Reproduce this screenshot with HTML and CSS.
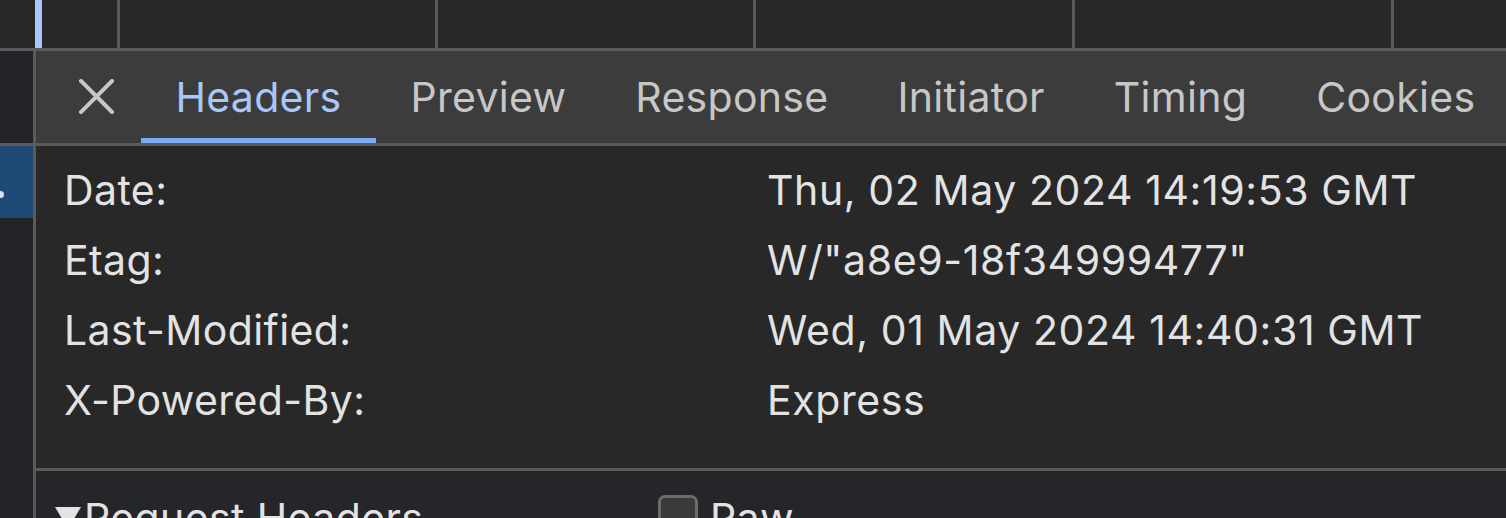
FILE: index.html
```html
<!DOCTYPE html>
<html>
<head>
<meta charset="utf-8">
<link rel="stylesheet" href="styles.css">
</head>
<body>
<div class="app">
  <div class="topstrip">
    <div class="cell c1"></div>
    <div class="cell c2"></div>
    <div class="cell c3"></div>
    <div class="cell c3"></div>
    <div class="cell c4"></div>
    <div class="cell c4"></div>
    <div class="cell c5"></div>
  </div>
  <div class="main">
    <div class="sidebar">
      <div class="side-top"></div>
      <div class="side-line"></div>
      <div class="side-sel"><span class="dot"></span></div>
      <div class="side-rest"></div>
    </div>
    <div class="panel">
      <div class="tabbar">
        <div class="close">
          <svg width="35" height="35" viewBox="0 0 35 35"><path d="M2 2 L33 33 M33 2 L2 33" stroke="#c7c7c7" stroke-width="4" stroke-linecap="square" fill="none"/></svg>
        </div>
        <div class="tab active">Headers</div>
        <div class="tab">Preview</div>
        <div class="tab">Response</div>
        <div class="tab">Initiator</div>
        <div class="tab">Timing</div>
        <div class="tab">Cookies</div>
      </div>
      <div class="headers">
        <div class="row"><span class="name">Date:</span><span class="value">Thu, 02 May 2024 14:19:53 GMT</span></div>
        <div class="row"><span class="name">Etag:</span><span class="value">W/"a8e9-18f34999477"</span></div>
        <div class="row"><span class="name">Last-Modified:</span><span class="value">Wed, 01 May 2024 14:40:31 GMT</span></div>
        <div class="row"><span class="name">X-Powered-By:</span><span class="value">Express</span></div>
      </div>
      <div class="section">
        <span class="tri"></span><span class="sec-title">Request Headers</span>
        <span class="raw"><span class="box"></span>Raw</span>
      </div>
    </div>
  </div>
</div>
</body>
</html>
```
FILE: styles.css
```css
html, body {
  margin: 0;
  padding: 0;
  background: #282828;
  overflow: hidden;
}
.app {
  width: 1506px;
  height: 518px;
  display: flex;
  flex-direction: column;
  font-family: Inter, "Noto Sans", sans-serif;
  overflow: hidden;
}
.topstrip {
  height: 48px;
  display: flex;
  background: #282828;
  border-bottom: 3px solid #5a5a5a;
  flex: none;
}
.cell { height: 48px; box-sizing: border-box; flex: none; }
.c1 { width: 42px; border-right: 7px solid #a8c7fa; }
.c2 { width: 78px; border-right: 3px solid #5a5a5a; }
.c3 { width: 318px; border-right: 3px solid #5a5a5a; }
.c4 { width: 319px; border-right: 3px solid #5a5a5a; }
.c5 { flex: 1; }

.main {
  flex: 1;
  display: flex;
}
.sidebar {
  width: 33px;
  border-right: 3px solid #5a5a5a;
  display: flex;
  flex-direction: column;
  background: #232427;
  flex: none;
}
.side-top { height: 92px; }
.side-line { height: 3px; background: #5a5a5a; }
.side-sel {
  height: 72px;
  background: #1f4a75;
  position: relative;
}
.dot {
  position: absolute;
  left: -3px;
  top: 45px;
  width: 7px;
  height: 7px;
  border-radius: 50%;
  background: #cfe2ff;
}
.side-rest { flex: 1; }

.panel {
  flex: 1;
  display: flex;
  flex-direction: column;
  min-width: 0;
  overflow: hidden;
}
.tabbar {
  height: 92px;
  background: #3c3c3c;
  border-bottom: 3px solid #5a5a5a;
  display: flex;
  align-items: stretch;
  flex: none;
  overflow: hidden;
}
.close {
  width: 105px;
  flex: none;
  display: flex;
  align-items: center;
  padding-left: 43px;
  box-sizing: border-box;
}
.close svg { display: block; margin-top: -1px; }
.tab {
  flex: none;
  padding: 0 34.5px;
  display: flex;
  align-items: center;
  font-size: 41px;
  letter-spacing: 0.3px;
  color: #c7c7c7;
  position: relative;
  white-space: nowrap;
}
.tab.active { color: #a8c7fa; }
.tab.active::after {
  content: "";
  position: absolute;
  left: 0;
  right: 0;
  bottom: 0;
  height: 5px;
  background: #7cacf8;
}
.headers {
  height: 325px;
  box-sizing: border-box;
  padding: 9px 0 0 28px;
  border-bottom: 3px solid #5a5a5a;
  background: #282828;
  flex: none;
}
.row {
  height: 70px;
  display: flex;
  align-items: center;
  color: #e3e3e3;
  font-size: 41px;
  letter-spacing: 0.4px;
  white-space: nowrap;
}
.name { width: 702px; flex: none; }
.value {
  font-size: 41px;
  letter-spacing: 0.6px;
  margin-left: 1px;
}
.section {
  flex: 1;
  background: #252629;
  display: flex;
  align-items: flex-start;
  padding: 22px 0 0 19px;
  color: #e3e3e3;
  font-size: 41px;
  letter-spacing: 0.4px;
  white-space: nowrap;
  line-height: 50px;
}
.tri {
  width: 0;
  height: 0;
  border-left: 13px solid transparent;
  border-right: 13px solid transparent;
  border-top: 22px solid #e3e3e3;
  margin-top: 14px;
  margin-right: 3px;
}
.sec-title { width: 574px; }
.raw { display: flex; align-items: flex-start; }
.box {
  width: 34px;
  height: 34px;
  border: 3px solid #6b6b6b;
  border-radius: 7px;
  background: #3a3a3a;
  margin-right: 12px;
  margin-top: 2px;
}
```
